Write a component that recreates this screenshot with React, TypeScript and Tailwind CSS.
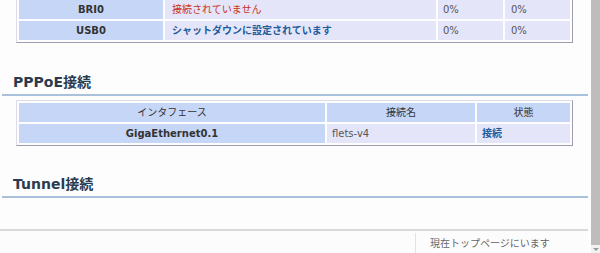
const PORTS = [
  { name: "BRI0", status: "接続されていません", tone: "text-[#c8331b]", rx: "0%", tx: "0%" },
  { name: "USB0", status: "シャットダウンに設定されています", tone: "text-[#1d5c9b] font-bold", rx: "0%", tx: "0%" },
] as const;

const FRAME =
  "ml-[16px] w-[557px] table-fixed border-separate border-spacing-[2px] border border-[#dcdcea] border-r-[#9d9daf] border-b-[#9d9daf]";

function Heading({ children }: { children: React.ReactNode }) {
  return (
    <div className="ml-[2px] border-b-2 border-[#a9c1da] pb-[2px] pl-[11px]">
      <h2 className="text-[14px] font-bold leading-[20px] text-[#2b3a4e]">{children}</h2>
    </div>
  );
}

export default function App() {
  return (
    <div className="flex h-[253px] w-[600px] overflow-hidden bg-[#fdfdfd] font-['DejaVu_Sans','Noto_Sans_CJK_JP',sans-serif] text-[10px] text-[#333]">
      <main className="flex w-[588px] flex-col">
        {/* tail of the interface table, scrolled past its header */}
        <table className={`${FRAME} -mt-[3px]`}>
          <colgroup>
            <col className="w-[144px]" />
            <col className="w-[271px]" />
            <col className="w-[65px]" />
            <col />
          </colgroup>
          <tbody>
            {PORTS.map((port) => (
              <tr key={port.name} className="h-[19px]">
                <td className="bg-[#c6d6f7] p-0 text-center font-bold leading-[17px]">{port.name}</td>
                <td className={`bg-[#e5e5fa] p-0 pl-[7px] leading-[17px] ${port.tone}`}>{port.status}</td>
                <td className="bg-[#e5e5fa] p-0 pl-[5px] leading-[17px] text-[#555]">{port.rx}</td>
                <td className="bg-[#e5e5fa] p-0 pl-[6px] leading-[17px] text-[#555]">{port.tx}</td>
              </tr>
            ))}
          </tbody>
        </table>

        <div className="mt-[29px]">
          <Heading>PPPoE接続</Heading>
        </div>

        <table className={`${FRAME} mt-[4px]`}>
          <colgroup>
            <col className="w-[306px]" />
            <col className="w-[148px]" />
            <col />
          </colgroup>
          <thead>
            <tr className="h-[19px]">
              <th className="bg-[#c6d6f7] p-0 text-center font-normal leading-[17px]">インタフェース</th>
              <th className="bg-[#c6d6f7] p-0 text-center font-normal leading-[17px]">接続名</th>
              <th className="bg-[#c6d6f7] p-0 text-center font-normal leading-[17px]">状態</th>
            </tr>
          </thead>
          <tbody>
            <tr className="h-[19px]">
              <td className="bg-[#c6d6f7] p-0 text-center font-bold leading-[17px]">GigaEthernet0.1</td>
              <td className="bg-[#e5e5fa] p-0 pl-[5px] leading-[17px] text-[#555]">flets-v4</td>
              <td className="bg-[#e5e5fa] p-0 pl-[5px] font-bold leading-[17px] text-[#1d5c9b]">接続</td>
            </tr>
          </tbody>
        </table>

        <div className="mt-[28px]">
          <Heading>Tunnel接続</Heading>
        </div>

        <footer className="mt-[31px] flex flex-1 border-t-2 border-[#d9d9d9] bg-[#fcfcfc]">
          <div className="ml-[415px] mt-[2px] w-px bg-[#e2e2e2]" />
          <p className="pl-[14px] pt-[7px] leading-[12px] text-[#666]">現在トップページにいます</p>
        </footer>
      </main>

      <div className="w-[3px]" />
      <div className="flex w-[9px] flex-col">
        <div className="flex-1 bg-[#bdbdbd]" />
        <div className="flex h-[8px] items-center justify-center bg-[#f1f1f1]">
          <span className="h-0 w-0 border-x-[3px] border-t-[3px] border-x-transparent border-t-[#9a9a9a]" />
        </div>
      </div>
    </div>
  );
}
